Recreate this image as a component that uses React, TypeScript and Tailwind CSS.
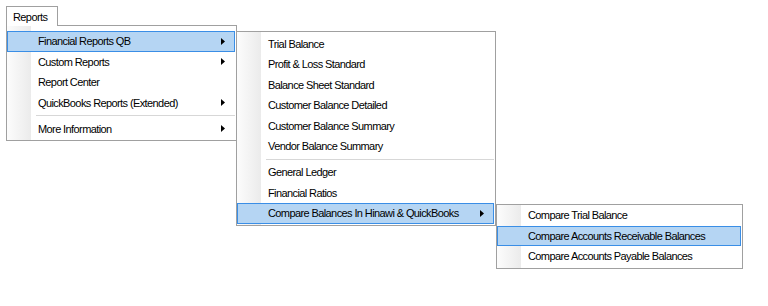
import React from "react";

type Entry = { label: string; arrow?: boolean; active?: boolean } | "sep";

function Arrow() {
  return (
    <svg width="4" height="7" viewBox="0 0 4 7" className="ml-auto shrink-0">
      <path d="M0 0 L4 3.5 L0 7 Z" fill="#000" />
    </svg>
  );
}

function MenuList({ entries }: { entries: Entry[] }) {
  return (
    <>
      {entries.map((e, i) =>
        e === "sep" ? (
          <div key={i} className="flex h-[5.5px] items-center pl-[29px]">
            <div className="h-px w-full bg-[#d7d7d7]" />
          </div>
        ) : (
          <div
            key={i}
            className={`flex h-[20.5px] items-center whitespace-nowrap border pl-[30px] pr-[9px] leading-[14px] ${
              e.active ? "border-[#3a8ee6] bg-[#b5d5f3]" : "border-transparent"
            }`}
          >
            <span>{e.label}</span>
            {e.arrow && <Arrow />}
          </div>
        )
      )}
    </>
  );
}

const panel =
  "border border-[#a0a0a0] bg-white bg-[linear-gradient(to_right,#fcfcfc,#ebebeb_24px,#ffffff_24px)] pr-px";

export default function App() {
  const main: Entry[] = [
    { label: "Financial Reports QB", arrow: true, active: true },
    { label: "Custom Reports", arrow: true },
    { label: "Report Center" },
    { label: "QuickBooks Reports (Extended)", arrow: true },
    "sep",
    { label: "More Information", arrow: true },
  ];
  const sub1: Entry[] = [
    { label: "Trial Balance" },
    { label: "Profit & Loss Standard" },
    { label: "Balance Sheet Standard" },
    { label: "Customer Balance Detailed" },
    { label: "Customer Balance Summary" },
    { label: "Vendor Balance Summary" },
    "sep",
    { label: "General Ledger" },
    { label: "Financial Ratios" },
    { label: "Compare Balances In Hinawi & QuickBooks", arrow: true, active: true },
  ];
  const sub2: Entry[] = [
    { label: "Compare Trial Balance" },
    { label: "Compare Accounts Receivable Balances", active: true },
    { label: "Compare Accounts Payable Balances" },
  ];

  return (
    <div className="relative h-[306px] w-[768px] overflow-hidden bg-white font-['Liberation_Sans',Arial,sans-serif] text-[11px] tracking-[-0.6px] text-black">
      <div className="flex flex-col pl-[6px] pt-[6px]">
        <div className="relative z-10 flex h-[20px] w-[52px] items-center whitespace-nowrap border border-b-0 border-[#a0a0a0] bg-white pl-[6px] leading-[14px]">
          Reports
        </div>
        <div className={`-mt-px w-[231px] pt-[5px] pb-px ${panel}`}>
          <MenuList entries={main} />
        </div>
      </div>

      <div className={`absolute left-[236px] top-[31px] w-[260px] pt-[1.5px] pb-px ${panel}`}>
        <MenuList entries={sub1} />
      </div>

      <div className={`absolute left-[496px] top-[204px] w-[247px] pb-px ${panel}`}>
        <MenuList entries={sub2} />
      </div>
    </div>
  );
}
